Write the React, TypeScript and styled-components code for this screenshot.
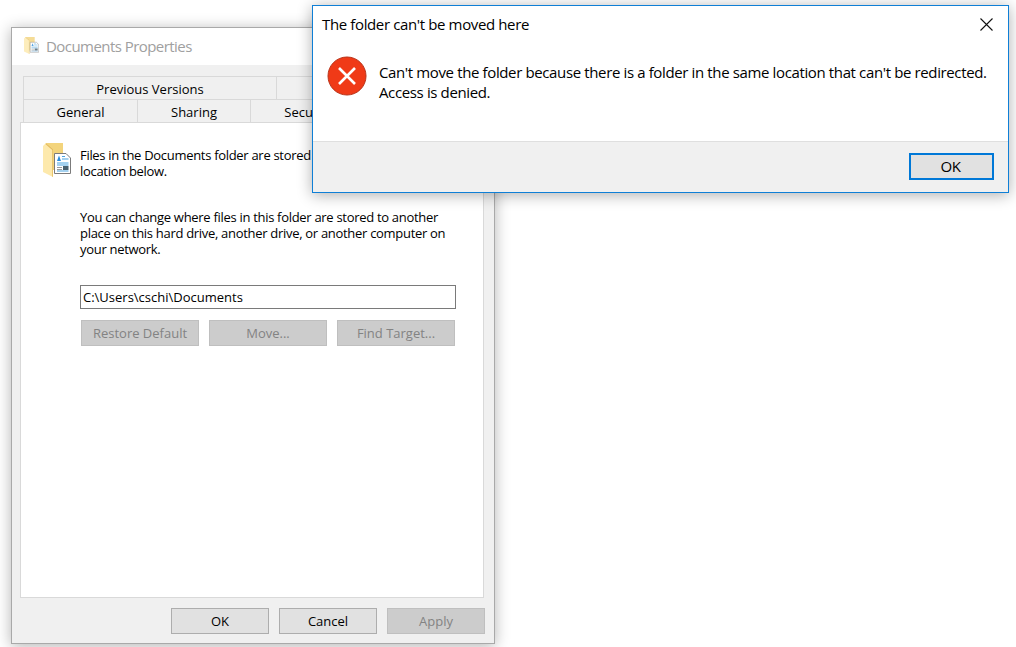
import React from "react";
import styled, { createGlobalStyle } from "styled-components";

const Global = createGlobalStyle`
  html, body { margin: 0; padding: 0; background: #fff; }
  body { font-family: "Open Sans", "Noto Sans", "Liberation Sans", sans-serif; overflow: hidden; }
  #root { width: 1016px; height: 647px; }
`;

const Desktop = styled.div`
  position: relative;
  width: 1016px;
  height: 647px;
  overflow: hidden;
  background: #fff;
`;

const PropertiesWindow = styled.div`
  position: absolute;
  left: 11px;
  top: 27px;
  width: 484px;
  height: 617px;
  box-sizing: border-box;
  border: 1px solid #a9a9a9;
  background: #f0f0f0;
  box-shadow: 0 2px 14px rgba(0, 0, 0, 0.3);
  display: flex;
  flex-direction: column;
  color: #000;
  font-size: 13px;
`;

const TitleBar = styled.div`
  height: 37px;
  flex: none;
  background: #fff;
  display: flex;
  align-items: center;
  gap: 7px;
  padding: 0 0 2px 12px;
  box-sizing: border-box;
`;

const TitleText = styled.span`
  color: #a0a0a0;
  font-size: 15px;
  letter-spacing: -0.55px;
  white-space: nowrap;
`;

const Tabs = styled.div`
  flex: none;
  margin: 11px 10px 0 11px;
  display: flex;
  flex-direction: column;
`;

const TabRow = styled.div`
  display: flex;
  height: 23px;
  box-sizing: border-box;
  border-top: 1px solid #d9d9d9;
  border-left: 1px solid #d9d9d9;
`;

const Tab = styled.div<{ $w: number }>`
  width: ${(p) => p.$w}px;
  flex: none;
  box-sizing: border-box;
  border-right: 1px solid #d9d9d9;
  text-align: center;
  line-height: 24px;
  white-space: nowrap;
  overflow: hidden;
`;

const Panel = styled.div`
  flex: none;
  height: 476px;
  margin: 0 10px 0 8px;
  box-sizing: border-box;
  background: #fff;
  border: 1px solid #d9d9d9;
  padding: 20px 27px 0 22px;
  display: flex;
  flex-direction: column;
`;

const IntroRow = styled.div`
  display: flex;
  align-items: flex-start;
  gap: 9px;
  height: 66px;
`;

const Paragraph = styled.div`
  line-height: 16px;
  white-space: pre;
  letter-spacing: -0.3px;
`;

const IntroText = styled(Paragraph)`
  margin-top: 4px;
`;

const Explain = styled(Paragraph)`
  margin: 0 0 0 37px;
  height: 76px;
`;

const PathField = styled.div`
  margin-left: 37px;
  width: 376px;
  height: 24px;
  box-sizing: border-box;
  border: 1px solid #7a7a7a;
  line-height: 22px;
  padding-left: 2px;
  background: #fff;
`;

const ActionRow = styled.div`
  margin: 11px 0 0 38px;
  display: flex;
  gap: 10px;
`;

const WinButton = styled.div<{ $disabled?: boolean }>`
  width: 118px;
  height: 26px;
  box-sizing: border-box;
  text-align: center;
  line-height: 24px;
  white-space: nowrap;
  background: ${(p) => (p.$disabled ? "#cccccc" : "#e1e1e1")};
  border: 1px solid ${(p) => (p.$disabled ? "#bfbfbf" : "#adadad")};
  color: ${(p) => (p.$disabled ? "#838383" : "#000")};
`;

const FooterButton = styled(WinButton)`
  width: 98px;
`;

const Footer = styled.div`
  flex: none;
  margin: 10px 9px 0 0;
  display: flex;
  justify-content: flex-end;
  gap: 10px;
`;

const AlertWindow = styled.div`
  position: absolute;
  left: 312px;
  top: 5px;
  width: 697px;
  height: 188px;
  box-sizing: border-box;
  border: 1px solid #0f7fd6;
  background: #fff;
  box-shadow: 0 2px 14px rgba(0, 0, 0, 0.32);
  display: flex;
  flex-direction: column;
  font-size: 15px;
  letter-spacing: -0.37px;
  color: #000;
`;

const AlertTitleBar = styled.div`
  height: 38px;
  flex: none;
  box-sizing: border-box;
  display: flex;
  align-items: center;
  justify-content: space-between;
  padding: 0 15px 2px 9px;
`;

const AlertBody = styled.div`
  flex: 1;
  display: flex;
  align-items: flex-start;
  gap: 12px;
  padding: 12px 0 0 14px;
`;

const AlertMessage = styled.div`
  line-height: 20px;
  white-space: pre;
  padding-top: 6px;
`;

const AlertFooter = styled.div`
  flex: none;
  height: 51px;
  box-sizing: border-box;
  background: #f0f0f0;
  border-top: 1px solid #dfdfdf;
  display: flex;
  justify-content: flex-end;
  align-items: flex-start;
  padding: 11px 14px 0 0;
`;

const DefaultButton = styled.div`
  width: 85px;
  height: 27px;
  box-sizing: border-box;
  background: #e1e1e1;
  border: 2px solid #0078d7;
  padding-right: 2px;
  text-align: center;
  line-height: 23px;
  font-size: 15px;
`;

const IconSvg = styled.svg<{ $faded?: boolean }>`
  flex: none;
  opacity: ${(p) => (p.$faded ? 0.8 : 1)};
`;

const FolderDocIcon = ({ w, h, faded }: { w: number; h: number; faded?: boolean }) => (
  <IconSvg $faded={faded} width={w} height={h} viewBox="0 0 28 34" preserveAspectRatio="none">
    <path d="M3 0 H20 V27 H9 Z" fill="#f3d47c" />
    <path d="M0 3 L3 0 L10 6 V34 L0 29 Z" fill="#fde9ac" />
    <path d="M3 0 L10 6 V34 L9.2 33.6 V7 L2.6 1.2 Z" fill="#e4bc60" />
    <path d="M11.5 10.5 H23 L27.5 15 V30.5 H11.5 Z" fill="#fff" stroke="#7b7b7b" strokeWidth="1" />
    <path d="M14 18 L16 12.5 L18 18 Z" fill="#2e8fdc" />
    <path d="M19 13.5 H22 M19 16 H25.5 M14 20 H25.5 M14 22 H25.5 M14 28 H25.5" stroke="#4aa3e0" strokeWidth="1.1" />
    <rect x="20" y="23" width="5.5" height="4" fill="#49606e" />
    <path d="M14 24.5 H19 M14 26.5 H19" stroke="#9a9a9a" strokeWidth="1" />
  </IconSvg>
);

const ErrorIcon = () => (
  <IconSvg width="40" height="40" viewBox="0 0 40 40">
    <circle cx="20" cy="20" r="19" fill="#f03a17" stroke="#b83218" strokeWidth="1" />
    <path d="M12 12 L28 28 M28 12 L12 28" stroke="#fff" strokeWidth="2.6" />
  </IconSvg>
);

const CloseIcon = () => (
  <IconSvg width="13" height="13" viewBox="0 0 13 13">
    <path d="M0.5 0.5 L12.5 12.5 M12.5 0.5 L0.5 12.5" stroke="#111" strokeWidth="1.1" />
  </IconSvg>
);

export default function App() {
  return (
    <Desktop>
      <Global />
      <PropertiesWindow>
        <TitleBar>
          <FolderDocIcon w={15} h={17} faded />
          <TitleText>Documents Properties</TitleText>
        </TitleBar>
        <Tabs>
          <TabRow>
            <Tab $w={253}>Previous Versions</Tab>
            <Tab $w={207} />
          </TabRow>
          <TabRow>
            <Tab $w={114}>General</Tab>
            <Tab $w={113}>Sharing</Tab>
            <Tab $w={116}>Security</Tab>
            <Tab $w={117} />
          </TabRow>
        </Tabs>
        <Panel>
          <IntroRow>
            <FolderDocIcon w={28} h={34} />
            <IntroText>{"Files in the Documents folder are stored in the target\nlocation below."}</IntroText>
          </IntroRow>
          <Explain>
            {"You can change where files in this folder are stored to another\nplace on this hard drive, another drive, or another computer on\nyour network."}
          </Explain>
          <PathField>C:\Users\cschi\Documents</PathField>
          <ActionRow>
            <WinButton $disabled>Restore Default</WinButton>
            <WinButton $disabled>Move...</WinButton>
            <WinButton $disabled>Find Target...</WinButton>
          </ActionRow>
        </Panel>
        <Footer>
          <FooterButton>OK</FooterButton>
          <FooterButton>Cancel</FooterButton>
          <FooterButton $disabled>Apply</FooterButton>
        </Footer>
      </PropertiesWindow>
      <AlertWindow>
        <AlertTitleBar>
          <span>The folder can't be moved here</span>
          <CloseIcon />
        </AlertTitleBar>
        <AlertBody>
          <ErrorIcon />
          <AlertMessage>
            {"Can't move the folder because there is a folder in the same location that can't be redirected.\nAccess is denied."}
          </AlertMessage>
        </AlertBody>
        <AlertFooter>
          <DefaultButton>OK</DefaultButton>
        </AlertFooter>
      </AlertWindow>
    </Desktop>
  );
}
